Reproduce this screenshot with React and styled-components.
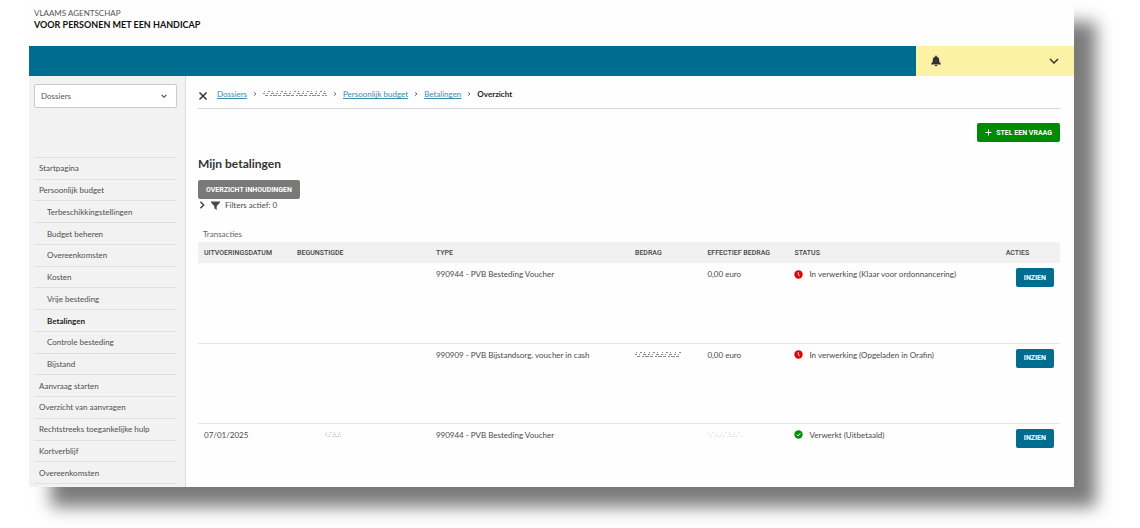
import React, { useState } from 'react'
import styled, { createGlobalStyle } from 'styled-components'

const GlobalStyle = createGlobalStyle`
    * {
        box-sizing: border-box;
    }

    body {
        margin: 0;
        background-color: #ffffff;
        color: #4a4a4a;
        font-family: Lato, "Liberation Sans", sans-serif;
        font-size: 8px;
        line-height: 12px;
    }

    button, select {
        font-family: inherit;
    }
`

const Page = styled.div`
    height: 100vh;
    min-height: 480px;
    padding: 2px 66px 41px 29px;
    display: flex;
    flex-direction: column;
`

const Window = styled.div`
    flex: 1;
    min-height: 0;
    display: flex;
    flex-direction: column;
    background-color: #fefefe;
    box-shadow: 22px 20px 16px rgba(0, 0, 0, 0.52);
`

const Brand = styled.header`
    height: 44px;
    padding: 5px;
    text-transform: uppercase;
`

const BrandLine = styled.div`
    font-size: ${props => props.$strong ? "9px" : "8px"};
    font-weight: ${props => props.$strong ? "700" : "400"};
    color: ${props => props.$strong ? "#111111" : "#555555"};
`

const TopBar = styled.div`
    height: 30px;
    flex-shrink: 0;
    display: flex;
    justify-content: flex-end;
    background-color: #006c90;
`

const UserMenu = styled.button`
    width: 158px;
    padding: 0 15px;
    display: flex;
    align-items: center;
    justify-content: space-between;
    border: none;
    background-color: #fcf2a6;
    color: #333333;
    cursor: pointer;
`

const Body = styled.div`
    flex: 1;
    min-height: 0;
    display: flex;
`

const Sidebar = styled.nav`
    width: 157px;
    flex-shrink: 0;
    padding: 8px 8px 3px 5px;
    display: flex;
    flex-direction: column;
    border-right: 1px solid #dcdcdc;
    background-color: #f2f2f2;
`

const SelectBox = styled.div`
    height: 24px;
    margin-bottom: 49px;
    padding-right: 9px;
    flex-shrink: 0;
    display: flex;
    align-items: center;
    border: 1px solid #cccccc;
    border-radius: 2px;
    background-color: #ffffff;
    color: #555555;
`

const Select = styled.select`
    flex: 1;
    height: 100%;
    padding: 0 6px;
    appearance: none;
    border: none;
    background-color: transparent;
    color: #555555;
    font-size: 8px;
`

const Menu = styled.ul`
    flex: 1;
    min-height: 0;
    margin: 0;
    padding: 0;
    display: flex;
    flex-direction: column;
    list-style: none;
    border-top: 1px solid #e0e0e0;
`

const MenuItem = styled.li`
    flex: 1;
    display: flex;
    border-bottom: 1px solid #e0e0e0;
`

const MenuLink = styled.a`
    flex: 1;
    display: flex;
    align-items: center;
    padding-left: ${props => props.$sub ? "13px" : "5px"};
    color: ${props => props.$active ? "#222222" : "#505050"};
    font-weight: ${props => props.$active ? "700" : "400"};
    text-decoration: none;
`

const Content = styled.main`
    flex: 1;
    min-width: 0;
    padding: 0 14px 0 12px;
    overflow: hidden;
`

const Breadcrumb = styled.div`
    height: 33px;
    padding-top: 4px;
    display: flex;
    align-items: center;
    gap: 9px;
    border-bottom: 1px solid #d4d8d8;
`

const IconButton = styled.button`
    padding: 4px 0 0;
    display: flex;
    border: none;
    background: none;
    color: #333333;
    cursor: pointer;
`

const Crumbs = styled.ol`
    margin: 0;
    padding: 0;
    display: flex;
    align-items: center;
    gap: 6px;
    list-style: none;
`

const Crumb = styled.li`
    display: flex;
    align-items: center;
    gap: 6px;
    color: #222222;
    font-weight: 700;
`

const CrumbLink = styled.a`
    color: #3a8cab;
    font-weight: 400;
    text-decoration: underline;
    text-underline-offset: 1px;
`

const Actions = styled.div`
    padding-top: 14px;
    display: flex;
    justify-content: flex-end;
`

const colors = {
    green: "#008a00",
    grey: "#797977",
    blue: "#006c90",
}

const Button = styled.button`
    height: 19px;
    padding: 0 8px;
    display: inline-flex;
    align-items: center;
    gap: 4px;
    border: none;
    border-radius: 2px;
    background-color: ${props => colors[props.$color]};
    color: #ffffff;
    font-family: Roboto, sans-serif;
    font-size: 7px;
    font-weight: 700;
    text-transform: uppercase;
    white-space: nowrap;
    cursor: pointer;
`

const Title = styled.h1`
    margin: 14px 0 8px;
    color: #333333;
    font-size: 12px;
    font-weight: 700;
    line-height: 16px;
`

const Filters = styled.button`
    margin-bottom: 17px;
    padding: 0;
    display: flex;
    align-items: center;
    gap: 5px;
    border: none;
    background: none;
    color: #4a4a4a;
    font-size: 8px;
    line-height: 12px;
    cursor: pointer;
`

const Table = styled.table`
    width: 100%;
    table-layout: fixed;
    border-collapse: collapse;
`

const Caption = styled.caption`
    padding: 0 5px 2px;
    color: #666666;
    text-align: left;
`

const Th = styled.th`
    width: ${props => props.$width};
    height: 21px;
    padding: 0 6px;
    background-color: #f1f1f1;
    color: #444444;
    font-family: Roboto, sans-serif;
    font-size: 7px;
    font-weight: 500;
    text-align: left;
    text-transform: uppercase;
    white-space: nowrap;
`

const Tr = styled.tr`
    height: 80px;
    border-bottom: 1px solid #e6e6e6;
`

const Td = styled.td`
    padding: 5px 6px;
    text-align: ${props => props.$right ? "right" : "left"};
    vertical-align: top;
    white-space: nowrap;
`

const Status = styled.span`
    display: flex;
    align-items: center;
    gap: 6px;
`

const Chevron = ({ size = 10, turn = 0, stroke = 2 }) => (
    <svg width={size} height={size} viewBox="0 0 10 10" fill="none" stroke="currentColor" strokeWidth={stroke}>
        <path d="M1 3l4 4 4-4" transform={`rotate(${turn} 5 5)`} />
    </svg>
)

const BellIcon = () => (
    <svg width="10" height="12" viewBox="0 0 10 12" fill="currentColor">
        <path d="M5 .5c.5 0 .8.3.8.8v.4C7.4 2 8.2 3.3 8.2 4.8c0 2 .4 2.9 1.5 3.7v1H.3v-1C1.4 7.7 1.8 6.800 1.800 4.800 1.800 3.300 2.600 2 4.200 1.700v-.4c0-.5.3-.8.8-.8z" />
        <path d="M3.700 10h2.600a1.300 1.300 0 0 1-2.600 0z" />
    </svg>
)

const CloseIcon = () => (
    <svg width="10" height="10" viewBox="0 0 10 10" fill="none" stroke="currentColor" strokeWidth="1.5">
        <path d="M1.500 1.500l7 7M8.500 1.500l-7 7" />
    </svg>
)

const PlusIcon = () => (
    <svg width="7" height="7" viewBox="0 0 7 7" stroke="currentColor">
        <path d="M3.500 .5v6M.5 3.500h6" />
    </svg>
)

const FilterIcon = () => (
    <svg width="9" height="9" viewBox="0 0 9 9" fill="#4a4a4a">
        <path d="M0 .5h9v1L5.700 5.200V9L3.300 7.200v-2L0 1.500z" />
    </svg>
)

const StatusIcon = ({ done }) => (
    <svg width="9" height="9" viewBox="0 0 9 9" fill="none" stroke="#ffffff">
        <circle cx="4.500" cy="4.500" r="4.200" fill={done ? "#0a8f0a" : "#e60000"} stroke="none" />
        <path d={done ? "M2.700 4.600l1.300 1.300 2.300-2.500" : "M4.300 2.200v2.500l1.500 1.300"} />
    </svg>
)

// what is left of a wiped out value: rows of broken strokes
const Wiped = ({ width, start = 0, color, opacity = 1 }) => (
    <svg width={width} height="8" viewBox={`0 0 ${width} 8`} stroke={color} opacity={opacity} aria-hidden="true">
        <path d={`M${start + 1} 2.500H${width}`} strokeDasharray="1 3 2 2 1 4" />
        <path d={`M${start} 4.500H${width}`} strokeDasharray="2 2 1 3 3 2" />
        <path d={`M${start + 2} 6.500H${width}`} strokeDasharray="3 2 2 1 4 1" />
    </svg>
)

const menu = [
    { label: "Startpagina" },
    { label: "Persoonlijk budget" },
    { label: "Terbeschikkingstellingen", sub: true },
    { label: "Budget beheren", sub: true },
    { label: "Overeenkomsten", sub: true },
    { label: "Kosten", sub: true },
    { label: "Vrije besteding", sub: true },
    { label: "Betalingen", sub: true, active: true },
    { label: "Controle besteding", sub: true },
    { label: "Bijstand", sub: true },
    { label: "Aanvraag starten" },
    { label: "Overzicht van aanvragen" },
    { label: "Rechtstreeks toegankelijke hulp" },
    { label: "Kortverblijf" },
    { label: "Overeenkomsten" },
]

const columns = [
    { label: "Uitvoeringsdatum", width: "10.8%" },
    { label: "Begunstigde", width: "16.1%" },
    { label: "Type", width: "23.1%" },
    { label: "Bedrag", width: "8.4%" },
    { label: "Effectief bedrag", width: "10.1%" },
    { label: "Status", width: "24.5%" },
    { label: "Acties", width: "7%" },
]

const payments = [
    {
        type: "990944 - PVB Besteding Voucher",
        effective: "0,00 euro",
        status: "In verwerking (Klaar voor ordonnancering)",
    },
    {
        type: "990909 - PVB Bijstandsorg. voucher in cash",
        amount: <Wiped width={46} color="#555555" opacity={0.7} />,
        effective: "0,00 euro",
        status: "In verwerking (Opgeladen in Orafin)",
    },
    {
        date: "07/01/2025",
        payee: <Wiped width={44} start={28} color="#888888" opacity={0.4} />,
        type: "990944 - PVB Besteding Voucher",
        effective: <Wiped width={34} color="#999999" opacity={0.2} />,
        status: "Verwerkt (Uitbetaald)",
        done: true,
    },
]

function App() {

    const [dossier, setDossier] = useState("Dossiers")

  return (
    <Page>
        <GlobalStyle />
        <Window>
            <Brand>
                <BrandLine>Vlaams Agentschap</BrandLine>
                <BrandLine $strong>voor personen met een handicap</BrandLine>
            </Brand>

            <TopBar>
                <UserMenu aria-label="Gebruikersmenu">
                    <BellIcon />
                    <Chevron stroke={1.5} />
                </UserMenu>
            </TopBar>

            <Body>
                <Sidebar>
                    <SelectBox>
                        <Select aria-label="Dossiers" value={dossier} onChange={e => setDossier(e.target.value)}>
                            <option>Dossiers</option>
                        </Select>
                        <Chevron size={6} />
                    </SelectBox>
                    <Menu>
                        {menu.map((item, i) => (
                            <MenuItem key={i}>
                                <MenuLink href="#" $sub={item.sub} $active={item.active}>{item.label}</MenuLink>
                            </MenuItem>
                        ))}
                    </Menu>
                </Sidebar>

                <Content>
                    <Breadcrumb>
                        <IconButton aria-label="Sluiten"><CloseIcon /></IconButton>
                        <Crumbs>
                            <Crumb><CrumbLink href="#">Dossiers</CrumbLink><Chevron size={4} turn={-90} /></Crumb>
                            <Crumb>
                                <CrumbLink href="#" aria-label="Dossier"><Wiped width={64} color="#3a7cb0" opacity={0.8} /></CrumbLink>
                                <Chevron size={4} turn={-90} />
                            </Crumb>
                            <Crumb><CrumbLink href="#">Persoonlijk budget</CrumbLink><Chevron size={4} turn={-90} /></Crumb>
                            <Crumb><CrumbLink href="#">Betalingen</CrumbLink><Chevron size={4} turn={-90} /></Crumb>
                            <Crumb>Overzicht</Crumb>
                        </Crumbs>
                    </Breadcrumb>

                    <Actions>
                        <Button $color="green"><PlusIcon />Stel een vraag</Button>
                    </Actions>

                    <Title>Mijn betalingen</Title>
                    <Button $color="grey">Overzicht inhoudingen</Button>
                    <Filters>
                        <Chevron size={8} turn={-90} />
                        <FilterIcon />
                        Filters actief: 0
                    </Filters>

                    <Table>
                        <Caption>Transacties</Caption>
                        <thead>
                            <tr>
                                {columns.map(col => (
                                    <Th key={col.label} $width={col.width}>{col.label}</Th>
                                ))}
                            </tr>
                        </thead>
                        <tbody>
                            {payments.map((row, i) => (
                                <Tr key={i}>
                                    <Td>{row.date}</Td>
                                    <Td>{row.payee}</Td>
                                    <Td>{row.type}</Td>
                                    <Td>{row.amount}</Td>
                                    <Td>{row.effective}</Td>
                                    <Td><Status><StatusIcon done={row.done} />{row.status}</Status></Td>
                                    <Td $right><Button $color="blue">Inzien</Button></Td>
                                </Tr>
                            ))}
                        </tbody>
                    </Table>
                </Content>
            </Body>
        </Window>
    </Page>
  )
}

export default App
